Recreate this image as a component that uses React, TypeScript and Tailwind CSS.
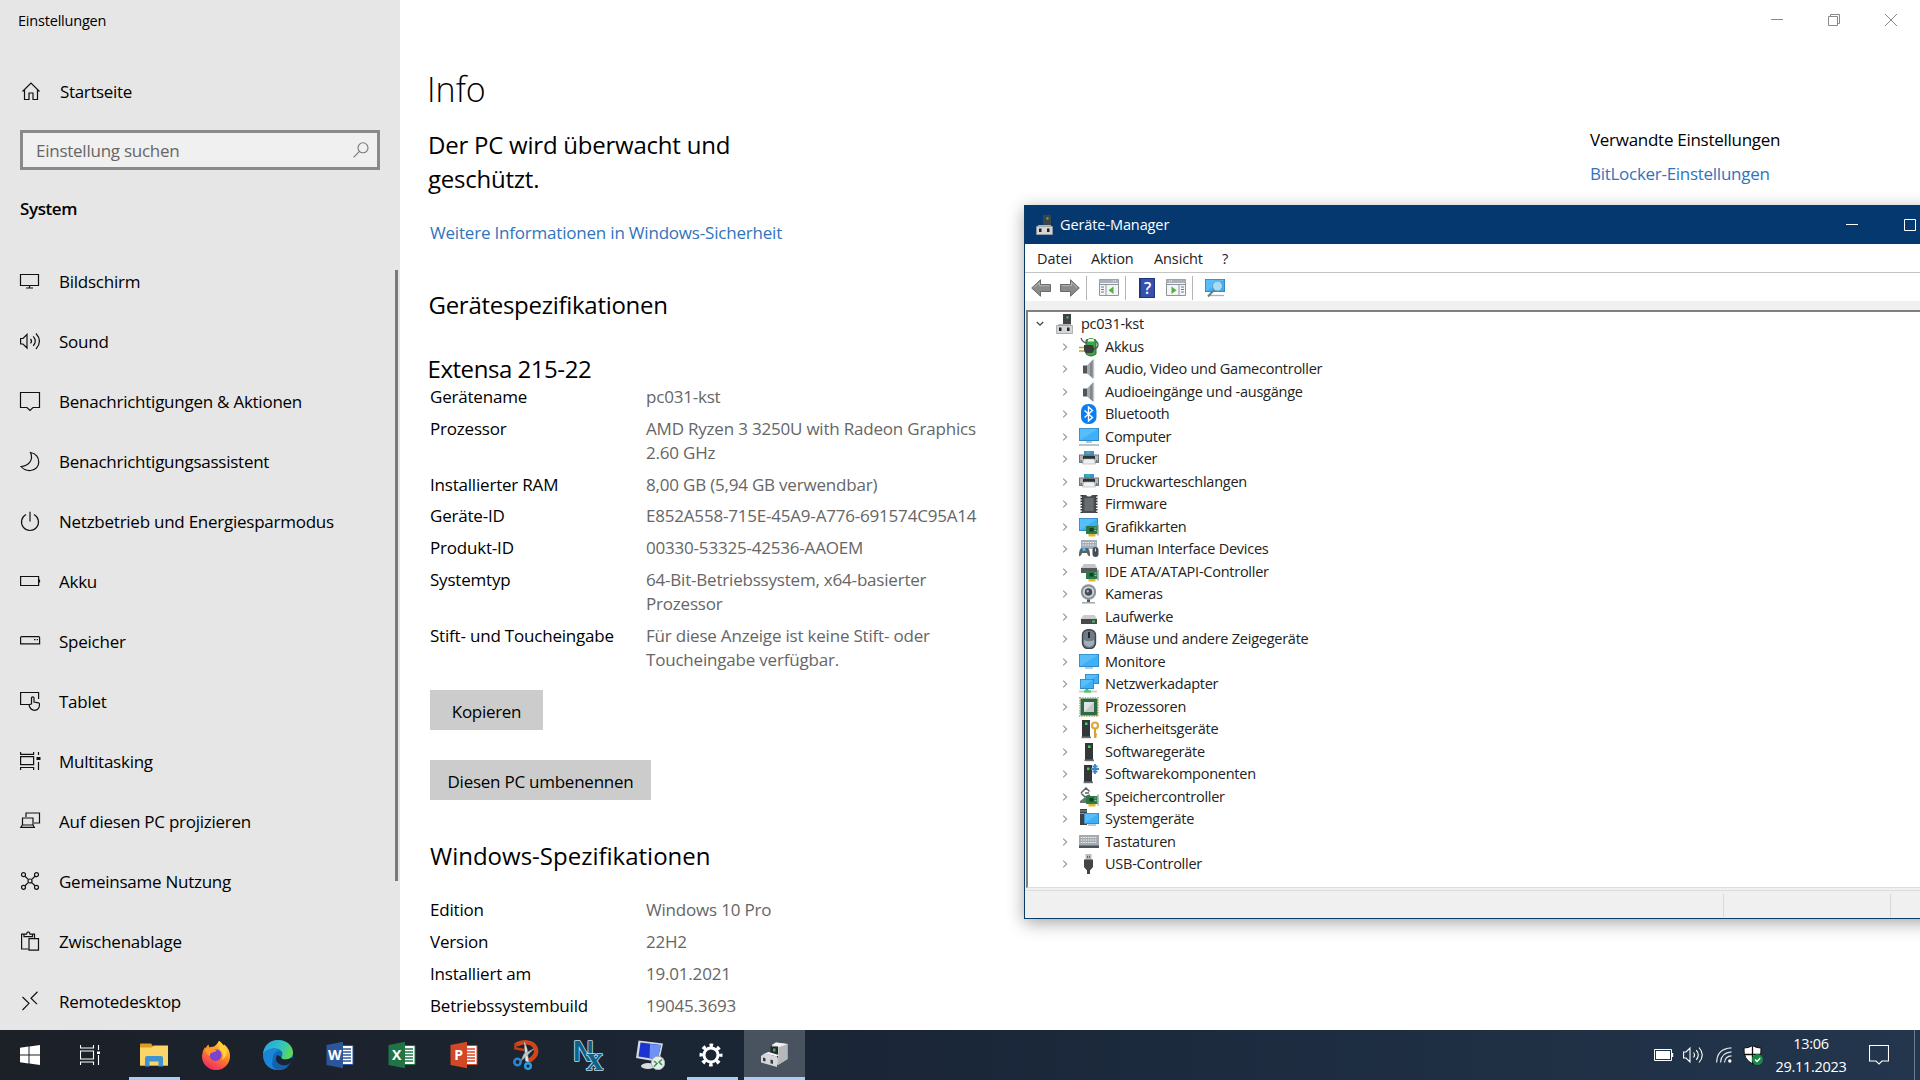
import React from "react";

const navItems = [
  { icon: "display", label: "Bildschirm" },
  { icon: "sound", label: "Sound" },
  { icon: "message", label: "Benachrichtigungen & Aktionen" },
  { icon: "moon", label: "Benachrichtigungsassistent" },
  { icon: "power", label: "Netzbetrieb und Energiesparmodus" },
  { icon: "battery", label: "Akku" },
  { icon: "storage", label: "Speicher" },
  { icon: "tablet", label: "Tablet" },
  { icon: "multitask", label: "Multitasking" },
  { icon: "project", label: "Auf diesen PC projizieren" },
  { icon: "share", label: "Gemeinsame Nutzung" },
  { icon: "clipboard", label: "Zwischenablage" },
  { icon: "remote", label: "Remotedesktop" },
];

const deviceSpecs = [
  ["Gerätename", "pc031-kst"],
  ["Prozessor", "AMD Ryzen 3 3250U with Radeon Graphics\n2.60 GHz"],
  ["Installierter RAM", "8,00 GB (5,94 GB verwendbar)"],
  ["Geräte-ID", "E852A558-715E-45A9-A776-691574C95A14"],
  ["Produkt-ID", "00330-53325-42536-AAOEM"],
  ["Systemtyp", "64-Bit-Betriebssystem, x64-basierter\nProzessor"],
  ["Stift- und Toucheingabe", "Für diese Anzeige ist keine Stift- oder\nToucheingabe verfügbar."],
];

const windowsSpecs = [
  ["Edition", "Windows 10 Pro"],
  ["Version", "22H2"],
  ["Installiert am", "19.01.2021"],
  ["Betriebssystembuild", "19045.3693"],
];

const devices = [
  { icon: "akku", label: "Akkus" },
  { icon: "speaker", label: "Audio, Video und Gamecontroller" },
  { icon: "speaker", label: "Audioeingänge und -ausgänge" },
  { icon: "bluetooth", label: "Bluetooth" },
  { icon: "computer", label: "Computer" },
  { icon: "printer", label: "Drucker" },
  { icon: "printer", label: "Druckwarteschlangen" },
  { icon: "firmware", label: "Firmware" },
  { icon: "gpu", label: "Grafikkarten" },
  { icon: "hid", label: "Human Interface Devices" },
  { icon: "ide", label: "IDE ATA/ATAPI-Controller" },
  { icon: "camera", label: "Kameras" },
  { icon: "drive", label: "Laufwerke" },
  { icon: "mouse", label: "Mäuse und andere Zeigegeräte" },
  { icon: "monitor", label: "Monitore" },
  { icon: "network", label: "Netzwerkadapter" },
  { icon: "cpu", label: "Prozessoren" },
  { icon: "security", label: "Sicherheitsgeräte" },
  { icon: "software", label: "Softwaregeräte" },
  { icon: "component", label: "Softwarekomponenten" },
  { icon: "storagectl", label: "Speichercontroller" },
  { icon: "system", label: "Systemgeräte" },
  { icon: "keyboard", label: "Tastaturen" },
  { icon: "usb", label: "USB-Controller" },
];

// Line icons of the settings sidebar
const navPaths: Record<string, React.ReactNode> = {
  home: <path d="M1.500 10.500 10 2l8.500 8.500M3.500 9v9.500H8V12h4v6.500h4.500V9" />,
  display: <path d="M.5 3.500h18v11H.5zM9.500 14.500v2.500M6 17h7" />,
  sound: (
    <path d="M.6 7.500H3l4-4v13.500l-4-4H.6zM10.500 7.800q2 2.300 0 4.600M13.200 5.400q4.200 4.800 0 9.500M16 2.500q7 7.700 0 15.500" />
  ),
  message: <path d="M.5 1.500h19v15H13l-3 3-3-3H.5z" />,
  moon: <path d="M10.500 1.500c11 1.500 11 17.500 0 18-4 .3-7.500-1.500-9.500-4 7-.5 13-6 9.500-14z" />,
  power: <path d="M10 .8v9.700M6 3.500a8.500 8.500 0 1 0 8 0" />,
  battery: (
    <>
      <path d="M.6 5.500h18v9H.6z" />
      <path d="M19.500 8.500v3" />
    </>
  ),
  storage: <path d="M.6 6.600q0-1 1-1h17q1 0 1 1v6.300H.6zM14 8.700h1.500M16.700 8.700h1.300" />,
  tablet: (
    <path d="M9 13.500H.6v-12h18V8M11.500 13V7q0-1.200 1.200-1.200T14 7v4l4.500.8q1 .3 1 1.500c0 4-2 6-5 6s-4.500-2-5.300-4.500q-.2-1.800 2.300-1.800z" />
  ),
  multitask: (
    <>
      <path d="M.6 1v2.300h13V1M.6 5.700h13v8H.6zM.6 18.900v-2.400h13v2.400M18.500 1v3M18.500 11v8" />
      <path d="M16.500 6h4v3h-4z" fill="#111" stroke="none" />
    </>
  ),
  project: <path d="M6 6V2h13.500v10H14M2.500 14V7h10.500v7M.8 16.300h13.500L13 14H2.300z" />,
  share: (
    <>
      <circle cx="3.500" cy="3.700" r="2" />
      <circle cx="16.500" cy="3.700" r="2" />
      <circle cx="3.500" cy="16.300" r="2" />
      <circle cx="16.500" cy="16.300" r="2" />
      <circle cx="10" cy="10" r="2" />
      <path d="m5 5.200 3.500 3.400M15 5.200l-3.500 3.400M5 14.800l3.500-3.400M15 14.800l-3.500-3.400" />
    </>
  ),
  clipboard: (
    <>
      <path d="M8.500 18H1.600V3.200H4M12 3.200h2.500V7M4 5.700V3.200h2.500Q7 .8 8.300.8T10 3.200h2.500v2.500z" />
      <path d="M9 7.700h9.500v11.500H9z" />
    </>
  ),
  remote: <path d="m2.500 6 6.500 6.300L2.500 19M17.500.8 11 7.200l6 6" />,
};

const NavIcon = ({ name }: { name: string }) => (
  <svg
    viewBox="0 0 21 20"
    className="w-[21px] h-5 shrink-0 overflow-visible"
    fill="none"
    stroke="#111"
    strokeWidth="1.2"
  >
    {navPaths[name]}
  </svg>
);

const Screen = ({ x, y, w, h }: { x: number; y: number; w: number; h: number }) => (
  <>
    <rect x={x} y={y} width={w} height={h} fill="#2b83bd" />
    <rect x={x + 0.8} y={y + 0.8} width={w - 1.6} height={h - 1.6} fill="#3fb0f7" />
    <path d={`M${x + 0.8} ${y + h - 0.8}V${y + 0.8}h${w - 1.6}z`} fill="#62c4fb" opacity=".7" />
  </>
);

const Card = () => (
  <>
    <path d="M7 9h11.500v8H7z" fill="#2c7a45" />
    <path d="M19 7.500v11" stroke="#8b959b" strokeWidth="1.200" />
    <path d="M9.500 17h7v2.500h-7z" fill="#e0b52e" />
    <path d="M10.500 11h4v3.500h-4z" fill="#173f25" />
    <path d="M15.500 11h2M15.500 13.500h2" stroke="#7fd08f" />
  </>
);

const Tower = ({ x }: { x: number }) => (
  <>
    <path d={`M${x} 1h8v17h-8z`} fill="#34373a" />
    <path d={`M${x - 0.5} 17.500h9.500v1.700h-9.500z`} fill="#6d7073" />
    <path d={`M${x + 3} 3.500h2.500v2.500h-2.500z`} fill="#35e04d" />
  </>
);

// Colour icons of the device tree
const devicePaths: Record<string, React.ReactNode> = {
  root: (
    <>
      <path d="M8 0h8v11H8z" fill="#3e4446" />
      <path d="M11.500 2.500h2v2h-2z" fill="#4fc06f" />
      <path d="M2 12l1.500-2h12l1.500 2v7.500H2z" fill="#b5b8ba" />
      <path d="M1.500 11.500h16v8h-16z" fill="#d3d5d6" stroke="#989b9d" strokeWidth=".7" />
      <path d="M4 13.500h2.500v3.500H4zM12 13.500h2.500v3.500H12z" fill="#222" />
    </>
  ),
  akku: (
    <>
      <path d="M7 3q5-3 10 0v14q-5 4-10 0z" fill="#3aa843" stroke="#277532" />
      <path d="M9 2.500q3-1.500 6 0v2H9z" fill="#e9f7e9" />
      <path d="M2 1q2 5 6 5M15 12q4-1 4-4t-2-3" fill="none" stroke="#555" strokeWidth="1.300" />
      <path d="M5 8h7q3 0 3 4t-3 4H8q-3 0-3-3z" fill="#3a3d3b" />
      <path d="M0 10.500h5M0 14h5" stroke="#b5a13c" strokeWidth="1.600" />
    </>
  ),
  speaker: (
    <>
      <path d="M4 6.500h4.500v8H4z" fill="#4f565b" />
      <path d="m8 6.500 6-6v19l-6-5z" fill="#a5abaf" />
      <path d="m11 4.500 3-4v19l-3-3z" fill="#81878c" />
      <path d="M14.500.5v19" stroke="#c0c5c8" strokeWidth="1.500" />
    </>
  ),
  bluetooth: (
    <>
      <rect x="2" y="0" width="15.500" height="20" rx="7" fill="#0a7df2" />
      <path d="m5.500 6.500 8 7-4 3.500V3l4 3.500-8 7" fill="none" stroke="#fff" strokeWidth="1.400" />
    </>
  ),
  computer: (
    <>
      <Screen x={0} y={1} w={20} h={13} />
      <path d="M7 14h6v2H7z" fill="#b7c7d1" />
      <path d="M0 18h20" stroke="#8ba8ba" strokeWidth="1.300" />
    </>
  ),
  printer: (
    <>
      <path d="M5 2h10v5H5z" fill="#3a93d8" />
      <path d="M7 2h4v3H7z" fill="#37b5a0" />
      <path d="M0 5.500h20V14H0z" fill="#6f767b" />
      <path d="M1 6.500h4V13H1zM15 6.500h4V13h-4z" fill="#b3b8bb" />
      <path d="M4 7h12v3H4z" fill="#2e3336" />
      <path d="m5 10-1.500 5h13L15 10z" fill="#eef0f1" stroke="#a9adb0" strokeWidth=".6" />
      <path d="M1.500 12h1.500M17 12h1.500" stroke="#333" />
    </>
  ),
  firmware: (
    <>
      <path d="M3 1h4q1 1.500 3 1.500T13 1h4v18H3z" fill="#4a4d4f" />
      <path d="M5.500 4h9v13h-9z" fill="#6a6d6f" />
      <path d="M2.500 1v18M17.500 1v18" stroke="#333" strokeWidth="2" strokeDasharray="1.600 1.200" />
    </>
  ),
  gpu: (
    <>
      <Screen x={0} y={1} w={19} h={13} />
      <Card />
    </>
  ),
  hid: (
    <>
      <path d="M2 1h16v9H2z" fill="#a3adb5" />
      <path d="M3.500 3.500h13M3.500 6h13" stroke="#eef2f5" strokeWidth="1.200" strokeDasharray="1.500 1" />
      <path d="M0 17q0-8 3-8h5q3 0 3 8-2 1-3-3H3q-1 4-3 3z" fill="#596067" />
      <path d="M3.500 9h3v3h-3z" fill="#58b5ef" />
      <rect x="13.500" y="8" width="6" height="10" rx="3" fill="#454c55" />
      <path d="M16.500 9.500v3" stroke="#d5dbe0" />
    </>
  ),
  ide: (
    <>
      <path d="m2 6 3-4h11l2 4z" fill="#c3c6c8" />
      <path d="M2 6h16v5H2z" fill="#55595b" />
      <Card />
    </>
  ),
  camera: (
    <>
      <circle cx="9.500" cy="8" r="7.700" fill="#8b9196" />
      <circle cx="9.500" cy="8" r="5.600" fill="#d3d8db" />
      <circle cx="9.500" cy="8" r="3.800" fill="#444d55" />
      <circle cx="8.700" cy="7.200" r="1.200" fill="#9bb5c9" />
      <path d="M8 15.500h3V18H8z" fill="#555" />
      <path d="M3 18.800h13" stroke="#9ba0a3" strokeWidth="1.400" />
    </>
  ),
  drive: (
    <>
      <path d="m2 12 2.500-4h11l2.500 4z" fill="#c9cbcc" />
      <path d="M2 12h16v5H2z" fill="#46494b" />
      <path d="M13 13.500h3v2h-3z" fill="#38c653" />
    </>
  ),
  mouse: (
    <>
      <rect x="3.500" y=".7" width="13" height="18.800" rx="5.500" fill="#6f7c88" stroke="#3d454d" strokeWidth="1.400" />
      <path d="M5 11q5 2.500 10 0v4q-5 6-10 0z" fill="#a3b0bb" />
      <path d="M10 3v6" stroke="#20262b" strokeWidth="2" />
    </>
  ),
  monitor: (
    <>
      <Screen x={0} y={2} w={20} h={13} />
      <path d="M6 16h8" stroke="#82b5d6" strokeWidth="1.300" />
    </>
  ),
  network: (
    <>
      <Screen x={6} y={0} w={14} h={10} />
      <Screen x={1} y={5} w={14} h={10} />
      <path d="M8 15v2.500" stroke="#47b763" strokeWidth="3" />
      <path d="M0 17.500h18" stroke="#c6cbce" strokeWidth="1.800" />
      <path d="M5 17.500h7" stroke="#47c763" strokeWidth="2.200" />
    </>
  ),
  cpu: (
    <>
      <rect x=".8" y=".8" width="18.400" height="18.400" fill="none" stroke="#c2b26a" strokeWidth="1.400" strokeDasharray="1.300 1.200" />
      <path d="M1.500 1.500h17v17h-17z" fill="#2c6a49" />
      <path d="M5 5h10v10H5z" fill="#dfe3e1" />
      <path d="M15 5v10H5z" fill="#c5cac8" />
    </>
  ),
  security: (
    <>
      <Tower x={3} />
      <circle cx="16" cy="6.500" r="3" fill="none" stroke="#dfa63c" strokeWidth="2.200" />
      <path d="M16 9.500V19M16 15.500h2M16 18h1.500" stroke="#dba033" strokeWidth="2" />
    </>
  ),
  software: <Tower x={6} />,
  component: (
    <>
      <Tower x={5} />
      <path d="M16 0v10M12 5h8M13.500 2.500h5M13.500 7.500h5" stroke="#3f86c5" strokeWidth="1.800" />
    </>
  ),
  storagectl: (
    <>
      <path d="m2 6 5-5 3.500 3.500M2 6l4 4 5-2M6 6h4" fill="none" stroke="#5c6367" strokeWidth="1.500" />
      <path d="m1 14 4-3h6v5H1z" fill="#6d7377" />
      <Card />
    </>
  ),
  system: (
    <>
      <path d="M1 0h7v16H1z" fill="#3c4144" />
      <path d="M1 2h7M1 4.500h7" stroke="#8e9599" />
      <Screen x={5} y={4} w={15} h={11} />
      <path d="M9 16h8" stroke="#a4b6c2" strokeWidth="1.400" />
    </>
  ),
  keyboard: (
    <>
      <path d="M0 3h20v11H0z" fill="#a3aab0" />
      <path d="M0 13.500h20V16H0z" fill="#4c5359" />
      <path d="M2 5.500h16M2 8h16M2 10.500h16" stroke="#eef1f3" strokeWidth="1.100" strokeDasharray="1.500 .8" />
    </>
  ),
  usb: (
    <>
      <path d="M6.500 0h6v6h-6z" fill="#b9bdc0" />
      <path d="M8 2h1v2H8zM10 2h1v2h-1z" fill="#666" />
      <path d="M5 5.500h9V13l-2.500 3h-4L5 13z" fill="#424548" />
      <path d="M9.500 15v5" stroke="#424548" strokeWidth="3" />
    </>
  ),
};

const DeviceIcon = ({ name }: { name: string }) => (
  <svg viewBox="0 0 20 20" className="w-5 h-5 shrink-0">
    {devicePaths[name]}
  </svg>
);

const SpecTable = ({ rows }: { rows: string[][] }) => (
  <div className="flex flex-col gap-2 text-[17px] leading-[23.850px] tracking-[-0.2px]">
    {rows.map(([label, value]) => (
      <div key={label} className="flex">
        <span className="w-[216px] shrink-0 whitespace-nowrap text-black">{label}</span>
        <span className="whitespace-pre text-[#666]">{value}</span>
      </div>
    ))}
  </div>
);

const Sidebar: React.FC = () => (
  <div className="w-[400px] h-full shrink-0 bg-[#e6e6e6] flex">
    <div className="flex flex-col w-[395px] text-black text-[17px] tracking-[-0.25px]">
      <h1 className="pl-[18px] mt-[11px] text-[14.500px] leading-5 tracking-[-0.2px]">
        Einstellungen
      </h1>
      <div className="flex items-center h-6 mt-[48px] pl-[21px]">
        <NavIcon name="home" />
        <span className="ml-[18px] pt-px tracking-[-0.35px]">Startseite</span>
      </div>
      <div className="flex items-center justify-between w-[360px] h-10 mt-[27px] ml-5 shrink-0 border-[3px] border-[#8a8a8a] bg-[#f0f0f0] pl-[13px] pr-2 text-[#666]">
        <span className="pt-0.5 tracking-[-0.25px]">Einstellung suchen</span>
        <svg viewBox="0 0 16 16" className="w-4 h-4" fill="none" stroke="#777" strokeWidth="1.100">
          <circle cx="10" cy="5.800" r="5" />
          <path d="M6.400 9.400.6 15.300" />
        </svg>
      </div>
      <h2 className="pl-5 mt-[27px] leading-6 font-semibold tracking-[-0.4px]">System</h2>
      <nav className="mt-[30px] flex flex-col">
        {navItems.map((item) => (
          <div key={item.label} className="flex items-center h-[60px] shrink-0 pl-5">
            <NavIcon name={item.icon} />
            <span className="ml-[18px] pt-[1.500px] whitespace-nowrap">{item.label}</span>
          </div>
        ))}
      </nav>
    </div>
    <div className="mt-[270px] w-[3px] h-[611px] bg-[#7a7a7a]" />
  </div>
);

const InfoPage: React.FC = () => (
  <div className="flex-1 bg-white flex overflow-hidden">
    <div className="ml-[30px] w-[1160px] shrink-0 flex flex-col text-black">
      <h1 className="mt-[67px] -ml-[3px] text-[34px] leading-[44px] font-light">Info</h1>
      <p className="mt-[17px] -ml-[2px] text-[24px] leading-[34px] tracking-[-0.23px]">
        Der PC wird überwacht und
        <br />
        geschützt.
      </p>
      <a className="mt-[25px] text-[17px] leading-6 text-[#2f74bd] tracking-[-0.2px]">
        Weitere Informationen in Windows-Sicherheit
      </a>
      <h2 className="mt-[43px] -ml-[1.500px] text-[24px] leading-[34px] tracking-[-0.28px]">
        Gerätespezifikationen
      </h2>
      <h3 className="mt-[31px] -ml-[2.500px] text-[24px] leading-8 tracking-[-0.45px]">
        Extensa 215-22
      </h3>
      <SpecTable rows={deviceSpecs} />
      <button className="mt-[18.500px] pt-[3px] w-[113px] h-10 shrink-0 bg-[#ccc] text-[17px] tracking-[-0.3px] whitespace-nowrap">
        Kopieren
      </button>
      <button className="mt-[30px] pt-[3px] w-[221px] h-10 shrink-0 bg-[#ccc] text-[17px] tracking-[-0.25px] whitespace-nowrap">
        Diesen PC umbenennen
      </button>
      <h2 className="mt-[39px] mb-[25.500px] text-[24px] leading-[34px]">
        Windows-Spezifikationen
      </h2>
      <SpecTable rows={windowsSpecs} />
    </div>
    <div className="w-[330px] shrink-0 flex flex-col">
      {/* Window controls */}
      <div className="self-end flex items-center gap-[45px] mt-[14px] mr-[23px]">
        <svg viewBox="0 0 12 12" className="w-3 h-3" stroke="#888">
          <path d="M0 5.500h12" />
        </svg>
        <svg viewBox="0 0 12 12" className="w-3 h-3" fill="none" stroke="#888">
          <path d="M.5 2.500h9v9h-9zM2.500 2.500v-2h9v9h-2" />
        </svg>
        <svg viewBox="0 0 12 12" className="w-3 h-3" stroke="#888">
          <path d="m0 0 12 12M12 0 0 12" />
        </svg>
      </div>
      <div className="mt-[102px] flex flex-col gap-[10px] text-[17px] leading-6 tracking-[-0.28px]">
        <h3 className="text-black">Verwandte Einstellungen</h3>
        <a className="text-[#2f74bd]">BitLocker-Einstellungen</a>
      </div>
    </div>
  </div>
);

const PanelIcon = ({ flip }: { flip?: boolean }) => (
  <svg viewBox="0 0 20 17" className={flip ? "w-5 h-[17px] -scale-x-100" : "w-5 h-[17px]"}>
    <path d="M.5.5h19v16H.5z" fill="#f4f5f6" stroke="#8f959b" />
    <path d="M.5.5h19V4H.5z" fill="#a9b1ba" />
    <path d="M14 2h1M16 2h1" stroke="#fff" />
    <path d="M.5 5.500h19" stroke="#8f959b" />
    <path d="M7 6v10.500" stroke="#8f959b" />
    <path d="M2 8h3M2 10.500h3M2 13h3" stroke="#5d7ca5" />
    <path d="M14.500 7.500v7.500L9.500 11.200z" fill="#4eb33c" />
  </svg>
);

const Arrow = ({ flip }: { flip?: boolean }) => (
  <svg viewBox="0 0 20 18" className={flip ? "w-5 h-[18px] -scale-x-100" : "w-5 h-[18px]"}>
    <path d="M.7 9 9.500.8v4.700h10v7h-10v4.700z" fill="#8b8b8b" stroke="#6a6a6a" />
    <path d="m3 8.500 5.500-5v3.200h10" fill="none" stroke="#b5b5b5" />
  </svg>
);

const DeviceManager: React.FC = () => (
  <div className="absolute left-[1024px] top-[205px] w-[920px] h-[714px] flex flex-col bg-[#f0f0f0] border border-t-0 border-[#0a3a66] shadow-[0_4px_16px_rgba(0,0,0,0.35)] text-[#222] text-[14.500px] tracking-[-0.25px]">
    <div className="flex items-center h-[39px] shrink-0 bg-[#04386f] pl-[10px] text-white tracking-[-0.1px]">
      <DeviceIcon name="root" />
      <span className="ml-[5px] flex-1">Geräte-Manager</span>
      <svg viewBox="0 0 12 12" className="w-3 h-3 mr-[46px]" stroke="#fff">
        <path d="M0 5.500h12" />
      </svg>
      <svg viewBox="0 0 12 12" className="w-3 h-3 mr-[27px]" stroke="#fff" fill="none">
        <path d="M.5.5h11v11H.5z" />
      </svg>
    </div>
    <div className="flex items-center h-[29px] shrink-0 bg-white border-b border-[#c4c4c4] pl-[12px] pt-0.5 tracking-[-0.1px]">
      <span className="w-[54px]">Datei</span>
      <span className="w-[63px]">Aktion</span>
      <span className="w-[68px]">Ansicht</span>
      <span>?</span>
    </div>
    <div className="flex items-center h-7 shrink-0 bg-white pl-[6px] pt-px">
      <Arrow />
      <div className="w-[9px]" />
      <Arrow flip />
      <div className="w-px h-6 ml-[6px] mr-3 bg-[#b5b5b5]" />
      <PanelIcon />
      <div className="w-px h-6 ml-[6px] mr-[13px] bg-[#b5b5b5]" />
      <div className="w-4 h-5 bg-[#3550ad] border border-l-2 border-[#20357f] text-white text-[16px] leading-[18px] text-center font-semibold">
        ?
      </div>
      <div className="w-[11px]" />
      <PanelIcon flip />
      <div className="w-px h-6 ml-[6px] mr-3 bg-[#b5b5b5]" />
      <svg viewBox="0 0 20 20" className="w-5 h-5">
        <Screen x={0} y={1} w={20} h={13} />
        <path d="M4 17.500h15" stroke="#9bb3c2" strokeWidth="1.300" />
        <circle cx="12.500" cy="8" r="5" fill="#a5dcf7" stroke="#6b9dba" />
        <path d="M9 12 3 18.500" stroke="#697e8b" strokeWidth="2" />
      </svg>
    </div>
    <div className="mt-[9px] ml-px h-[578px] shrink-0 bg-white border-t-2 border-l-2 border-[#808080] border-b border-b-[#dedede]">
      <div className="flex items-center h-[22.500px] mt-px pl-[8px]">
        <svg viewBox="0 0 8 8" className="w-2 h-2 mr-[11px]" fill="none" stroke="#444" strokeWidth="1.300">
          <path d="m.8 2 3.200 3.200L7.200 2" />
        </svg>
        <DeviceIcon name="root" />
        <span className="ml-[6px]">pc031-kst</span>
      </div>
      {devices.map((device) => (
        <div key={device.label} className="flex items-center h-[22.500px] pl-[34px]">
          <svg viewBox="0 0 6 8" className="w-1.5 h-2 mr-[11px]" fill="none" stroke="#999" strokeWidth="1.200">
            <path d="m1.200.6 3.400 3.400-3.400 3.400" />
          </svg>
          <DeviceIcon name={device.icon} />
          <span className="ml-[6px] whitespace-nowrap">{device.label}</span>
        </div>
      ))}
    </div>
    <div className="flex-1 flex mt-0.5 border-t border-[#dcdcdc] pt-[3px] pb-px">
      <div className="w-[699px] border-r border-[#d9d9d9]" />
      <div className="w-[167px] border-r border-[#d9d9d9]" />
    </div>
  </div>
);

const Office = ({ letter, dark, light }: { letter: string; dark: string; light: string }) => (
  <svg viewBox="0 0 28 28" className="w-7 h-7">
    <path d="M14 4.500h13v19H14z" fill="#fff" stroke={light} />
    <path d="M17 8h8M17 11h8M17 14h8M17 17h8M17 20h8" stroke={light} strokeWidth="1.300" />
    <path d="M.5 4 17 .8v26.400L.5 24z" fill={dark} />
    <text x="8.700" y="19" textAnchor="middle" fontSize="14" fontWeight="700" fill="#fff">
      {letter}
    </text>
  </svg>
);

const taskIcons = [
  {
    name: "explorer",
    open: true,
    icon: (
      <svg viewBox="0 0 28 24" className="w-7 h-6">
        <path d="M0 1.500Q0 .5 1 .5h10l2.500 3H28v19H0z" fill="#d99f1c" />
        <path d="M0 4.500h12L14 2.500h14V22.500H0z" fill="#fbd567" />
        <path d="M5 23.500v-8.500q0-2 2-2h14q2 0 2 2v8.500h-4.500v-5h-9v5z" fill="#3f93d3" />
      </svg>
    ),
  },
  {
    name: "firefox",
    icon: (
      <svg viewBox="0 0 30 30" className="w-[30px] h-[30px]">
        <defs>
          <linearGradient id="fox" x1=".8" y1="0" x2=".3" y2="1">
            <stop offset="0" stopColor="#ffe14a" />
            <stop offset=".45" stopColor="#ff8a20" />
            <stop offset="1" stopColor="#f0246b" />
          </linearGradient>
        </defs>
        <path
          d="M18 .8q2.500 3 5 5 .2-1 .1-1.500 6 5 5.900 12A14 14 0 0 1 1 16q0-5 3-9l.3 1.500Q6 5.500 7.500 4.500l.8 3q2-1 4-.8 3-1 5.700-5.900z"
          fill="url(#fox)"
        />
        <circle cx="14.500" cy="15" r="6" fill="#7a43d6" />
        <path d="M4 9q5-3 8 0l4 .8q-1 2-4 2.500-4 1-3 4-5-2-5-7.300z" fill="#ff9a2a" />
        <path d="M18.500 1q-2 5 1 9 4 4 1.500 10 6-4 4.500-10Q24 6 18.500 1z" fill="#ffcf3d" />
      </svg>
    ),
  },
  {
    name: "edge",
    icon: (
      <svg viewBox="0 0 30 30" className="w-[30px] h-[30px]">
        <defs>
          <linearGradient id="edgeTop" x1="0" y1=".3" x2="1" y2=".6">
            <stop offset="0" stopColor="#2aa4e2" />
            <stop offset=".6" stopColor="#35c5bb" />
            <stop offset="1" stopColor="#66d94a" />
          </linearGradient>
        </defs>
        <circle cx="15" cy="15" r="15" fill="#0f69bd" />
        <path d="M0 14C1 5 7 0 15 0c9 0 15 6 15 12.500 0 4.500-3.500 7-7.500 7-3 0-5-1.500-4-2.500 3-4-1-8.500-6-8.500C6 8.500 2 11 0 14z" fill="url(#edgeTop)" />
        <path d="M10 16q-2 7 4 11 5 3 11 0-4 3-10 3C5 30 0 23 0 14q4-5.500 12-5.500 3 .5 4.500 2Q11 11.500 10 16z" fill="#1a86d9" />
        <path d="M18.500 17c-1 1 1 2.500 4 2.500 2 0 4.500-.7 6-2.200L30 20l-4 5q-5 2-10-1-5-4-2-9z" fill="#1b202b" opacity=".95" />
        <path d="M12.500 17q0 8 8 8.500 4 0 7-3-5 7.500-12.500 7.500-7-1-5.500-9z" fill="#1361ad" />
      </svg>
    ),
  },
  { name: "word", icon: <Office letter="W" dark="#2b579a" light="#2b579a" /> },
  { name: "excel", icon: <Office letter="X" dark="#217346" light="#217346" /> },
  { name: "powerpoint", icon: <Office letter="P" dark="#d24726" light="#d24726" /> },
  {
    name: "snipping",
    icon: (
      <svg viewBox="0 0 26 30" className="w-[26px] h-[30px]" fill="none">
        <path d="M3.500 4.500C10 1 19 1.500 22 7c3 6-.5 11-7 14" stroke="#d2451b" strokeWidth="4.500" />
        <path d="M2.500 3v5.500l9 1.500" stroke="#c03d15" strokeWidth="2.500" />
        <path d="M11.500 2 14 9l1.500 13-3-1z" fill="#eceef0" stroke="#aab0b5" strokeWidth=".7" />
        <path d="m20.500 9-7 7L8 21l3-7z" fill="#c5cacf" stroke="#9aa1a7" strokeWidth=".7" />
        <circle cx="4.500" cy="22" r="3.200" stroke="#2a86d2" strokeWidth="2.500" />
        <circle cx="15" cy="26" r="2.800" stroke="#2a9ae2" strokeWidth="2.500" />
      </svg>
    ),
  },
  {
    name: "nx",
    icon: (
      <svg viewBox="0 0 31 31" className="w-[31px] h-[31px] overflow-visible">
        <g fill="#0c6288" stroke="#c5dbe6" strokeWidth="1.600" strokeLinejoin="round" fontWeight="700" paintOrder="stroke">
          <text x="0" y="21" fontSize="29" fontFamily="Liberation Sans">
            N
          </text>
          <text x="13.500" y="30" fontSize="33" fontFamily="Liberation Serif">
            x
          </text>
        </g>
      </svg>
    ),
  },
  {
    name: "rdp",
    icon: (
      <svg viewBox="0 0 29 30" className="w-[29px] h-[30px]">
        <ellipse cx="12" cy="26" rx="7" ry="3" fill="#d9dcdf" />
        <path d="M2.500.5 27 3.500 23 22 0 18z" fill="#d5d9e0" />
        <path d="M4.500 2.500 25 5l-3.500 14.500L2.500 16.500z" fill="#1b33cf" />
        <path d="M14 4 25 5l-3.500 14.500-8-1.500z" fill="#6f92f0" />
        <circle cx="22" cy="23" r="6.700" fill="#e9ecec" stroke="#a9b0b0" />
        <path d="m18 21 3 2.500-3 3M26 19.500l-3 2.500 3 3" fill="none" stroke="#2e9b45" strokeWidth="1.500" />
      </svg>
    ),
  },
  {
    name: "settings",
    open: true,
    icon: (
      <svg viewBox="0 0 24 24" className="w-6 h-6 mr-0.5" fill="none" stroke="#fff">
        <circle cx="12" cy="12" r="7" strokeWidth="3" />
        <circle cx="12" cy="12" r="9.800" strokeWidth="3.400" strokeDasharray="3.600 4.097" strokeDashoffset="1.800" />
      </svg>
    ),
  },
];

const Taskbar: React.FC = () => (
  <div className="relative h-[50px] shrink-0 flex bg-linear-to-r from-[#1c2027] via-[#1a2739] to-[#23364d] text-white">
    <div className="w-[60px] flex items-center justify-center">
      <svg viewBox="0 0 20 20" className="w-5 h-5" fill="#fff">
        <path d="M0 2.800 8.500 1.600v8H0zM9.500 1.500 20 0v9.600H9.500zM0 10.500h8.500v8L0 17.300zM9.500 10.500H20V20L9.500 18.600z" />
      </svg>
    </div>
    <div className="w-[63px] flex items-center pl-5">
      <svg viewBox="0 0 20 20" className="w-5 h-5" fill="none" stroke="#fff" strokeWidth="1.100">
        <path d="M.5 0v3h13V0M.5 6h13v8H.5zM.5 20v-3h13v3M18.500 0v5M18.500 10v10" />
        <path d="M17 6.500h3v2.500h-3z" fill="#fff" stroke="none" />
      </svg>
    </div>
    {taskIcons.map((task) => (
      <div key={task.name} className="relative w-[62px] flex items-center justify-center">
        {task.icon}
        {task.open && <div className="absolute left-[6px] bottom-0 w-[51px] h-[3px] bg-[#a9cdf5]" />}
      </div>
    ))}
    <div className="relative ml-[1px] w-[61px] flex items-center justify-center bg-[#49525f]">
      <svg viewBox="0 0 27 26" className="w-[27px] h-[26px]">
        <path d="m11 3 4-2.500 11.500 1.500v15L17 23l-6-4z" fill="#c9cbcc" />
        <path d="m18 5 8.500-3v15L17 23z" fill="#b5b8ba" />
        <path d="m11 3 4-2.500 11.500 1.500L18 5z" fill="#f0f1f1" />
        <path d="M9.500 4.500h7.500v11H9.500z" fill="#24282a" />
        <path d="M12 6.500h2.500v3H12z" fill="#38b84c" />
        <path d="m0 14 3.500-2.500L16 14.500V25L0 20.500z" fill="#d5d7d8" />
        <path d="m3.500 11.500 4-1.500L18 13l-2 1.500z" fill="#f4f4f4" />
        <path d="M2 15.500l2.500.7v3.300L2 19zM9.500 17.500l2.500.7v3.800l-2.500-.8z" fill="#3a3c3e" />
      </svg>
      <div className="absolute left-0 bottom-0 w-full h-[3px] bg-[#a9cdf5]" />
    </div>
    {/* System tray */}
    <div className="ml-auto flex items-center">
      <svg viewBox="0 0 20 12" className="w-5 h-3 mr-[9px]">
        <path d="M.5.5h17v11H.5z" fill="none" stroke="#fff" />
        <path d="M2 2h14v8H2z" fill="#fff" />
        <path d="M18.500 4v4" stroke="#fff" strokeWidth="1.400" />
      </svg>
      <svg viewBox="0 0 21 20" className="w-[21px] h-5 mr-3" fill="none" stroke="#fff" strokeWidth="1.100">
        <path d="M.6 7H3l4-4v14l-4-4H.6zM10.500 7.500q2 2.500 0 5M13.200 5.200q4.200 4.800 0 9.600M16 2.500q6.500 7.500 0 15" />
      </svg>
      <svg viewBox="0 0 16 16" className="w-4 h-4 mr-[11px]" fill="none" stroke="#dfe5ec" strokeWidth="1.200">
        <path d="M.6 15.500Q1 1.500 15.500.8M4.500 15.500Q5 5.500 15.500 4.800M8.500 15.500q.5-6.500 7-6.700" />
        <circle cx="13.800" cy="14" r="1.700" fill="#fff" stroke="none" />
      </svg>
      <svg viewBox="0 0 20 20" className="w-5 h-5 mr-[13px]">
        <path d="M9.500.5Q13 3 18 3q1 11-8.500 16Q0 14 1 3q5 0 8.500-2.500z" fill="#fff" stroke="#111" />
        <path d="M9.500 1v18M1 9.500h17" stroke="#111" strokeWidth="1.300" />
        <circle cx="14.500" cy="14.500" r="5.500" fill="#178a45" />
        <path d="m12 14.500 2 2 3.300-3.500" fill="none" stroke="#fff" strokeWidth="1.300" />
      </svg>
      <div className="w-[70px] flex flex-col items-center text-[14.500px] leading-[23px] tracking-[-0.3px] whitespace-nowrap">
        <span>13:06</span>
        <span>29.11.2023</span>
      </div>
      <svg viewBox="0 0 20 20" className="w-5 h-5 ml-[23px] mr-[25px]" fill="none" stroke="#fff" strokeWidth="1.100">
        <path d="M.5.500h19v15.500H13l-3 3-3-3H.5z" />
      </svg>
      <div className="w-px h-[50px] mr-[5px] bg-[#6d7b8b]" />
    </div>
  </div>
);

const App: React.FC = () => {
  return (
    <div className="relative w-[1920px] h-[1080px] overflow-hidden flex flex-col font-['Open_Sans','Noto_Sans',sans-serif]">
      <div className="flex-1 min-h-0 flex overflow-hidden">
        <Sidebar />
        <InfoPage />
      </div>
      <DeviceManager />
      <Taskbar />
    </div>
  );
};

export default App;
